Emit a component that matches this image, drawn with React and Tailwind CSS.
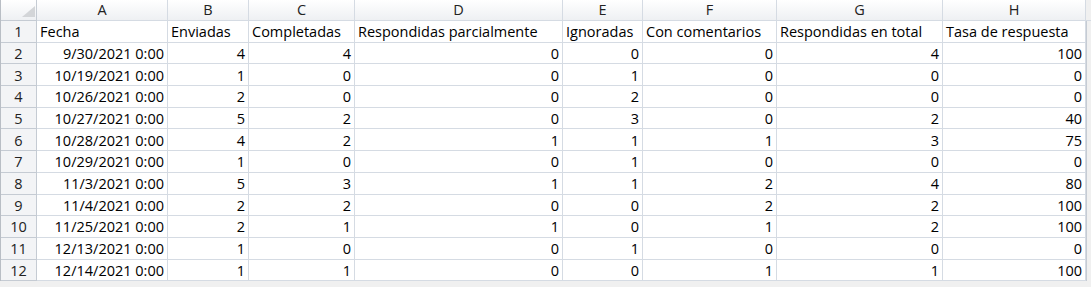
import React from 'react';

const columns = ['A', 'B', 'C', 'D', 'E', 'F', 'G', 'H'];

const headers = [
  'Fecha',
  'Enviadas',
  'Completadas',
  'Respondidas parcialmente',
  'Ignoradas',
  'Con comentarios',
  'Respondidas en total',
  'Tasa de respuesta',
];

const rows = [
  ['9/30/2021 0:00', 4, 4, 0, 0, 0, 4, 100],
  ['10/19/2021 0:00', 1, 0, 0, 1, 0, 0, 0],
  ['10/26/2021 0:00', 2, 0, 0, 2, 0, 0, 0],
  ['10/27/2021 0:00', 5, 2, 0, 3, 0, 2, 40],
  ['10/28/2021 0:00', 4, 2, 1, 1, 1, 3, 75],
  ['10/29/2021 0:00', 1, 0, 0, 1, 0, 0, 0],
  ['11/3/2021 0:00', 5, 3, 1, 1, 2, 4, 80],
  ['11/4/2021 0:00', 2, 2, 0, 0, 2, 2, 100],
  ['11/25/2021 0:00', 2, 1, 1, 0, 1, 2, 100],
  ['12/13/2021 0:00', 1, 0, 0, 1, 0, 0, 0],
  ['12/14/2021 0:00', 1, 1, 0, 0, 1, 1, 100],
];

const RowHeader = ({ children }) => (
  <div className="flex items-end justify-center border-r border-b border-[#c5cbd3] bg-[#f3f4f6] pb-[2px] text-[#222]">
    {children}
  </div>
);

const App = () => {
  return (
    <div
      className="h-[287px] w-[1091px] overflow-hidden bg-[#f0f0f0] text-[14.5px] leading-none text-black"
      style={{ fontFamily: '"Open Sans", "Liberation Sans", sans-serif' }}
    >
      <div className="grid grid-cols-[36px_131px_81px_106px_208px_80px_134px_166px_143px_1fr] border-l border-[#b9bec5]">
        {/* column letters */}
        <div className="relative h-[21px] border-r border-b border-[#c5cbd3] bg-gradient-to-b from-white to-[#eef0f3]">
          <svg className="absolute right-[1px] bottom-[3px]" width="13" height="11" viewBox="0 0 13 11">
            <polygon points="13,0 13,11 0,11" fill="#d3d5d8" />
          </svg>
        </div>
        {columns.map((c) => (
          <div
            key={c}
            className="flex h-[21px] items-center justify-center border-r border-b border-[#d5dbe3] bg-gradient-to-b from-white to-[#eef0f3] text-[#222]"
          >
            {c}
          </div>
        ))}
        <div className="h-[21px] border-b border-[#d5dbe3] bg-[#f0f0f0]" />

        {/* row 1 */}
        <RowHeader>1</RowHeader>
        {headers.map((h) => (
          <div key={h} className="flex h-[21.7px] items-end whitespace-nowrap border-r border-b border-[#d5dbe3] bg-white px-[3px] pb-[2px]">
            {h}
          </div>
        ))}
        <div className="border-l border-[#c5cbd3] bg-[#f0f0f0]" />

        {rows.map((r, i) => (
          <React.Fragment key={i}>
            <RowHeader>{i + 2}</RowHeader>
            {r.map((v, j) => (
              <div
                key={j}
                className="flex h-[21.7px] items-end justify-end whitespace-nowrap border-r border-b border-[#d5dbe3] bg-white px-[3px] pb-[2px]"
              >
                {v}
              </div>
            ))}
            <div className="border-l border-[#c5cbd3] bg-[#f0f0f0]" />
          </React.Fragment>
        ))}
      </div>
    </div>
  );
};

export default App;
